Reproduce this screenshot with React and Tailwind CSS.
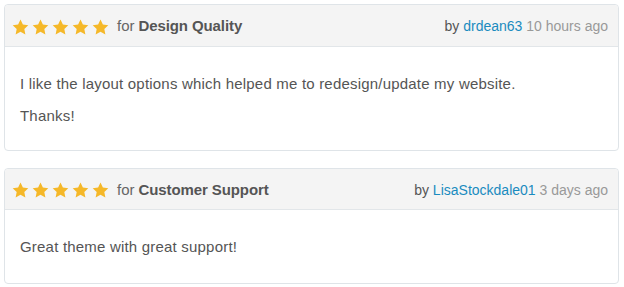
import React from "react";

const Star = () => (
  <svg width="17" height="16" viewBox="0 0 24 23" className="shrink-0">
    <path
      d="M12 0.8l3.4 7.2 7.8 1-5.7 5.4 1.5 7.8L12 18.4l-7 3.8 1.5-7.8L0.8 9l7.8-1z"
      fill="#f5b829"
    />
  </svg>
);

const Stars = () => (
  <div className="flex gap-[3px]">
    <Star />
    <Star />
    <Star />
    <Star />
    <Star />
  </div>
);

const Card = ({ topic, user, time, children, headerH }) => (
  <div className="rounded-[4px] border border-[#dfe4e8] bg-white">
    <div
      className={`flex items-center justify-between rounded-t-[4px] border-b border-[#e2e6e9] bg-[#f4f4f4] pl-[7px] pr-[10px] pt-[2px] ${headerH}`}
    >
      <div className="flex items-center">
        <Stars />
        <span className="ml-[8px] text-[15px] text-[#666]">for</span>
        <span className="ml-[4px] text-[15px] font-bold tracking-[-0.1px] text-[#555]">{topic}</span>
      </div>
      <div className="text-[14px]">
        <span className="text-[#555]">by </span>
        <span className="text-[#1a8bbf]">{user}</span>
        <span className="text-[#999]"> {time}</span>
      </div>
    </div>
    {children}
  </div>
);

export default function App() {
  return (
    <div
      className="flex flex-col gap-[17px] bg-white pl-[4px] pr-[5px] pt-[4px]"
      style={{ fontFamily: '"Liberation Sans", Arial, sans-serif' }}
    >
      <Card topic="Design Quality" user="drdean63" time="10 hours ago" headerH="h-[42px]">
        <div className="flex flex-col gap-[12px] px-[15px] pb-[24px] pt-[27px] text-[15px] leading-[20px] tracking-[0.2px] text-[#555]">
          <p>I like the layout options which helped me to redesign/update my website.</p>
          <p>Thanks!</p>
        </div>
      </Card>
      <Card topic="Customer Support" user="LisaStockdale01" time="3 days ago" headerH="h-[41px]">
        <div className="px-[15px] pb-[26px] pt-[27px] text-[15px] leading-[20px] tracking-[0.2px] text-[#555]">
          <p>Great theme with great support!</p>
        </div>
      </Card>
    </div>
  );
}
